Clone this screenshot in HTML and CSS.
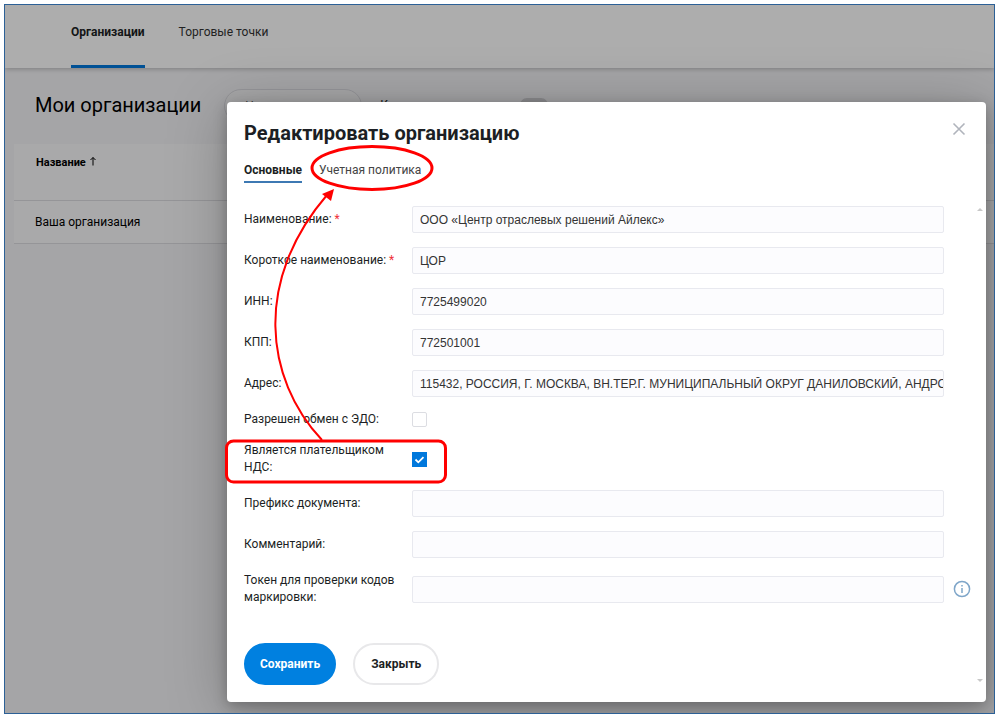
FILE: index.html
```html
<!DOCTYPE html>
<html lang="ru">
<head>
    <meta charset="UTF-8">
    <title>Мои организации</title>
    <link rel="stylesheet" href="styles.css">
</head>
<body>
    <div class="screen">
        <header class="topbar">
            <nav class="topnav">
                <a href="#" class="topnav-link active">Организации</a>
                <a href="#" class="topnav-link">Торговые точки</a>
            </nav>
        </header>

        <main class="page">
            <div class="page-head">
                <h1>Мои организации</h1>
                <button type="button" class="btn-new">Новая запись</button>
                <label class="switch-label" for="basket">Корзина</label>
                <input type="checkbox" class="switch" id="basket">
            </div>

            <table class="org-table">
                <thead>
                    <tr><th>Название <svg class="sort-icon" viewBox="0 0 8 10"><path d="M4 9.500V1.500M1.500 4L4 1.500l2.500 2.500"/></svg></th></tr>
                </thead>
                <tbody>
                    <tr><td>Ваша организация</td></tr>
                </tbody>
            </table>
        </main>

        <div class="overlay">
            <div class="modal" role="dialog" aria-labelledby="modalTitle">
                <div class="modal-head">
                    <h2 id="modalTitle">Редактировать организацию</h2>
                    <button type="button" class="btn-close" aria-label="Закрыть окно">
                        <svg viewBox="0 0 14 14"><path d="M1.500 1.500l11 11M12.500 1.500l-11 11"/></svg>
                    </button>
                </div>

                <nav class="tabs">
                    <a href="#" class="tab active">Основные</a>
                    <a href="#" class="tab">Учетная политика</a>
                </nav>

                <form class="org-form">
                    <div class="fields">
                        <div class="form-row">
                            <label for="name">Наименование: <span class="req">*</span></label>
                            <input type="text" id="name" value="ООО «Центр отраслевых решений Айлекс»">
                        </div>
                        <div class="form-row">
                            <label for="shortName">Короткое наименование: <span class="req">*</span></label>
                            <input type="text" id="shortName" value="ЦОР">
                        </div>
                        <div class="form-row">
                            <label for="inn">ИНН:</label>
                            <input type="text" id="inn" value="7725499020">
                        </div>
                        <div class="form-row">
                            <label for="kpp">КПП:</label>
                            <input type="text" id="kpp" value="772501001">
                        </div>
                        <div class="form-row">
                            <label for="address">Адрес:</label>
                            <input type="text" id="address" value="115432, РОССИЯ, Г. МОСКВА, ВН.ТЕР.Г. МУНИЦИПАЛЬНЫЙ ОКРУГ ДАНИЛОВСКИЙ, АНДРОПОВА">
                        </div>
                        <div class="form-row">
                            <label for="edo">Разрешен обмен с ЭДО:</label>
                            <input type="checkbox" class="check" id="edo">
                        </div>
                        <div class="form-row">
                            <label for="nds">Является плательщиком НДС:</label>
                            <div class="check-wrap">
                                <input type="checkbox" class="check" id="nds" checked>
                                <svg class="check-mark" viewBox="0 0 15 15"><path d="M3.500 7.500l2.800 2.800 5.200-5.200"/></svg>
                            </div>
                        </div>
                        <div class="form-row">
                            <label for="prefix">Префикс документа:</label>
                            <input type="text" id="prefix">
                        </div>
                        <div class="form-row">
                            <label for="comment">Комментарий:</label>
                            <input type="text" id="comment">
                        </div>
                        <div class="form-row">
                            <label for="token">Токен для проверки кодов маркировки:</label>
                            <input type="text" id="token">
                            <svg class="info-icon" viewBox="0 0 18 18"><circle cx="9" cy="9" r="7.600"/><path d="M9 8v5M9 5v1.500"/></svg>
                        </div>
                    </div>

                    <div class="actions">
                        <button type="submit" class="btn btn-primary">Сохранить</button>
                        <button type="button" class="btn">Закрыть</button>
                    </div>
                </form>

                <span class="scroll-arrow up"></span>
                <span class="scroll-arrow down"></span>

                <!-- red hints over the form -->
                <svg class="hints" viewBox="0 0 240 400" width="240" height="400">
                    <ellipse cx="155" cy="76" rx="60" ry="21.500"/>
                    <rect x="9.500" y="349" width="219" height="41" rx="7"/>
                    <path class="line" d="M105 348C47 286 37 188 110 103"/>
                    <path class="head" d="M117 97l-3 12-9-7z"/>
                </svg>
            </div>
        </div>
    </div>
</body>
</html>
```

FILE: styles.css
```css
* {
    box-sizing: border-box;
}

body {
    margin: 0;
    padding: 4px 5px 6px 4px;
    background-color: #fff;
    color: #1c1f24;
    font-family: Roboto, "Liberation Sans", sans-serif;
    font-size: 12px;
    line-height: 17px;
}

a {
    color: inherit;
    text-decoration: none;
}

button, input {
    font-family: inherit;
    font-size: 12px;
}

.screen {
    position: relative;
    min-height: calc(100vh - 10px);
    border: 1px solid #2c6096;
    background-color: #f4f4f7;
    overflow: hidden;
}

/* page under the dialog */
.topbar {
    position: relative;
    height: 63px;
    padding-left: 66px;
    background-color: #fff;
    box-shadow: 0 1px 5px rgba(0, 0, 0, 0.25);
}

.topnav {
    display: flex;
    gap: 34px;
    height: 100%;
}

.topnav-link {
    padding-top: 19px;
    border-bottom: 3px solid transparent;
    color: #333;
}

.topnav-link.active {
    font-weight: 700;
    color: #1c1f24;
    border-color: #0078dc;
}

.page {
    padding: 21px 0 0 9px;
}

.page-head {
    display: flex;
    align-items: flex-start;
    padding-left: 21px;
    height: 55px;
}

h1 {
    margin: 0;
    padding-top: 4px;
    font-size: 20px;
    line-height: 24px;
    font-weight: 400;
    color: #000;
}

.btn-new {
    width: 138px;
    height: 34px;
    margin-left: 23px;
    padding: 0 20px;
    border: 1px solid #dcdce2;
    border-radius: 17px;
    background-color: #f6f6f8;
    color: #555;
    text-align: left;
}

.switch-label {
    margin: 8px 92px 0 18px;
}

.switch {
    appearance: none;
    width: 28px;
    height: 14px;
    margin: 9px 0 0;
    border-radius: 7px;
    background-color: #d0d0d4;
}

.org-table {
    width: 100%;
    border-collapse: collapse;
    background-color: #fafafb;
    color: #000;
}

.org-table th {
    height: 56px;
    padding: 10px 22px;
    border-bottom: 1px solid #dcdce0;
    font-size: 11px;
    line-height: 17px;
    text-align: left;
    vertical-align: top;
}

.org-table td {
    height: 43px;
    padding: 1px 21px 0;
    border-bottom: 1px solid #dcdce0;
}

.sort-icon {
    width: 8px;
    height: 10px;
    fill: none;
    stroke: #000;
}

/* dialog */
.overlay {
    position: absolute;
    inset: 0;
    padding: 97px 8px 11px 222px;
    background-color: rgba(0, 0, 0, 0.32);
}

.modal {
    position: relative;
    height: 100%;
    padding: 19px 0 17px 17px;
    border-radius: 4px;
    background-color: #fff;
    box-shadow: 0 4px 14px rgba(0, 0, 0, 0.25), 0 8px 60px rgba(0, 0, 0, 0.25);
}

.modal-head {
    display: flex;
    justify-content: space-between;
    padding-right: 20px;
}

h2 {
    margin: 0;
    font-size: 20px;
    line-height: 24px;
    font-weight: 700;
}

.btn-close {
    width: 14px;
    height: 14px;
    margin-top: 1px;
    padding: 0;
    border: none;
    background: none;
    cursor: pointer;
}

.btn-close svg {
    display: block;
    fill: none;
    stroke: #b0b4bc;
    stroke-width: 1.6;
}

.tabs {
    display: flex;
    gap: 17px;
    margin-top: 17px;
}

.tab {
    padding-bottom: 2px;
    border-bottom: 2px solid transparent;
    color: #444;
}

.tab.active {
    font-weight: 700;
    color: #1c1f24;
    border-color: #3d79b3;
}

.fields {
    display: flex;
    flex-direction: column;
    gap: 14px;
    margin-top: 23px;
}

.form-row {
    display: grid;
    grid-template-columns: 168px 1fr 42px;
    align-items: center;
}

.form-row label {
    padding-right: 8px;
}

.req {
    color: #f0303a;
}

.form-row input[type="text"] {
    width: 100%;
    height: 27px;
    padding: 0 0 0 7px;
    border: 1px solid #e8e9ef;
    border-radius: 2px;
    background-color: #fcfcfe;
    color: #333;
    font-family: "Liberation Sans", Arial, sans-serif;
}

.check {
    appearance: none;
    display: block;
    width: 15px;
    height: 15px;
    margin: 0;
    border: 1px solid #dcdde2;
    border-radius: 2px;
    background-color: #fff;
}

.check:checked {
    border-color: #0078dc;
    border-radius: 0;
    background-color: #0078dc;
}

.check-wrap {
    position: relative;
    width: 15px;
}

.check-mark {
    position: absolute;
    inset: 0;
    fill: none;
    stroke: #fff;
    stroke-width: 1.8;
    pointer-events: none;
}

.info-icon {
    width: 18px;
    height: 18px;
    margin-left: 9px;
    fill: none;
    stroke: #7fa6c9;
    stroke-width: 1.5;
}

.actions {
    display: flex;
    gap: 17px;
    margin-top: 37px;
}

.btn {
    height: 42px;
    padding: 0 16px;
    border: 2px solid #e8e8ea;
    border-radius: 21px;
    background-color: #fff;
    color: #1c1f24;
    font-weight: 700;
    cursor: pointer;
}

.btn-primary {
    padding: 0 14px;
    border-color: #0080e0;
    background-color: #0080e0;
    color: #fff;
}

.scroll-arrow {
    position: absolute;
    right: 3px;
    border: 3px solid transparent;
}

.scroll-arrow.up {
    top: 106px;
    border-bottom-color: #c8c8c8;
    border-top: none;
}

.scroll-arrow.down {
    bottom: 20px;
    border-top-color: #c8c8c8;
    border-bottom: none;
}

.hints {
    position: absolute;
    top: -10px;
    left: -10px;
    fill: none;
    stroke: #f00;
    stroke-width: 3;
    pointer-events: none;
}

.hints .line {
    stroke-width: 2;
}

.hints .head {
    fill: #f00;
    stroke: none;
}
```
